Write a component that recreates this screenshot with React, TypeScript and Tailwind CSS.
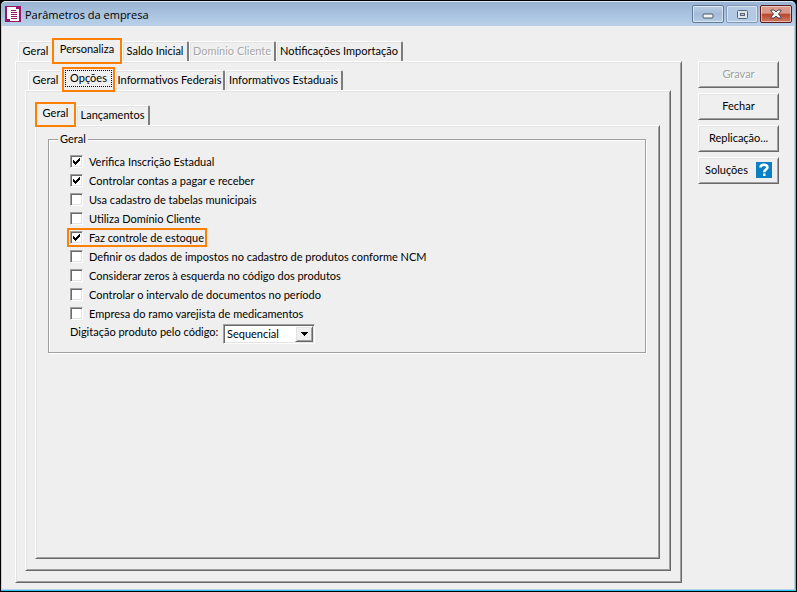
import { useState, type ReactNode } from "react";

const raised =
  "border border-t-white border-l-white border-r-[#696969] border-b-[#696969] shadow-[inset_1px_1px_0_#e3e3e3,inset_-1px_-1px_0_#a0a0a0]";

function TabRow({ label, children }: { label: string; children: ReactNode }) {
  return (
    <div role="tablist" aria-label={label} className="flex h-5 items-end pl-[3px] whitespace-nowrap">
      {children}
    </div>
  );
}

function Tab({
  width,
  children,
  edge = true,
  disabled = false,
}: {
  width: string;
  children: ReactNode;
  edge?: boolean;
  disabled?: boolean;
}) {
  return (
    <button
      type="button"
      role="tab"
      aria-selected={false}
      disabled={disabled}
      className={`h-5 shrink-0 rounded-t-[2px] border-t border-l border-white pb-0.5 shadow-[inset_1px_1px_0_#e3e3e3] ${
        edge ? "border-r-2 border-r-[#7c7c7c]" : ""
      } ${disabled ? "text-[#a8a8a8] [text-shadow:1px_1px_0_#fff]" : ""} ${width}`}
    >
      {children}
    </button>
  );
}

function SelectedTab({
  size,
  focus = false,
  children,
}: {
  size: string;
  focus?: boolean;
  children: ReactNode;
}) {
  return (
    <button
      type="button"
      role="tab"
      aria-selected
      className={`relative z-10 shrink-0 border-2 border-[#ff8000] bg-[#efefef] p-px pb-[3px] ${size}`}
    >
      <span
        className={`flex h-full items-center justify-center border pb-0.5 ${
          focus ? "border-dotted border-black" : "border-transparent"
        }`}
      >
        {children}
      </span>
    </button>
  );
}

function Option({
  id,
  label,
  initial = false,
  highlight = false,
}: {
  id: string;
  label: string;
  initial?: boolean;
  highlight?: boolean;
}) {
  const [checked, setChecked] = useState(initial);
  return (
    <div
      className={`flex h-[19px] items-center self-start border-2 px-px ${
        highlight ? "border-[#ff8000]" : "border-transparent"
      }`}
    >
      <span className="grid size-[13px] place-items-center">
        <input
          id={id}
          type="checkbox"
          checked={checked}
          onChange={(e) => setChecked(e.target.checked)}
          className="col-start-1 row-start-1 size-[13px] appearance-none border border-t-[#a0a0a0] border-l-[#a0a0a0] border-r-white border-b-white bg-white shadow-[inset_1px_1px_0_#696969,inset_-1px_-1px_0_#e3e3e3]"
        />
        {checked && (
          <svg
            viewBox="0 0 7 7"
            className="pointer-events-none col-start-1 row-start-1 size-[7px]"
            shapeRendering="crispEdges"
            aria-hidden="true"
          >
            <path d="M0 2h1v1h1v1h1V3h1V2h1V1h1V0h1v3H6v1H5v1H4v1H3v1H2V6H1V5H0z" />
          </svg>
        )}
      </span>
      <label htmlFor={id} className="pl-1.5 whitespace-nowrap">
        {label}
      </label>
    </div>
  );
}

function ActionButton({ children, disabled = false }: { children: ReactNode; disabled?: boolean }) {
  return (
    <button
      type="button"
      disabled={disabled}
      className={`flex h-[27px] w-full items-center justify-center gap-2 bg-[#efefef] pb-0.5 ${raised} ${
        disabled ? "text-[#a0a0a0] [text-shadow:1px_1px_0_#fff]" : ""
      }`}
    >
      {children}
    </button>
  );
}

const frameButton =
  "flex h-[18px] w-8 items-center justify-center rounded-[2px] border shadow-[inset_0_0_0_1px_rgba(255,255,255,0.5)]";

export default function App() {
  return (
    <div className="flex min-h-screen flex-col bg-black p-px font-['Lato','Liberation_Sans',sans-serif] text-[11px] leading-[14px] text-black">
      <div className="flex flex-1 flex-col rounded-t-[5px] border-r border-b border-[#26c9ea] bg-[#b9d1ea]">
        <header className="flex h-[25px] items-center rounded-t-[5px] border-t border-[#dfe9f5] bg-linear-to-b from-[#98b3d3] to-[#b9d1ea] pr-[3px] pl-1">
          <svg viewBox="0 0 16 16" className="size-4" shapeRendering="crispEdges" aria-hidden="true">
            <path fill="#97146a" d="M0 0h16v16H0z" />
            <path fill="#fff" d="M2 1h9v2h3v12H5v-2H2z" />
            <path fill="#97146a" d="M6 4h5v1H6zM6 6h6v1H6zM6 8h6v1H6zM6 10h6v1H6zM6 12h6v1H6z" />
          </svg>
          <h1 className="flex-1 pt-0.5 pl-1 font-['Open_Sans','Noto_Sans',sans-serif]">Parâmetros da empresa</h1>
          <div className="flex gap-0.5">
            <button
              type="button"
              aria-label="Minimizar"
              className={`${frameButton} border-[#5f7894] bg-linear-to-b from-[#bccfe5] via-[#a3bcd9] to-[#b5cce6]`}
            >
              <svg viewBox="0 0 12 6" className="mt-1 h-1.5 w-3" aria-hidden="true">
                <rect x="1" y="1" width="10" height="4" rx="1" fill="#f4f4f4" stroke="#4d5666" />
              </svg>
            </button>
            <button
              type="button"
              aria-label="Maximizar"
              disabled
              className={`${frameButton} border-[#8199b7] bg-linear-to-b from-[#b4c9e2] to-[#b2cae5]`}
            >
              <svg viewBox="0 0 11 9" className="h-[9px] w-[11px]" aria-hidden="true">
                <rect x=".5" y=".5" width="10" height="8" rx="1" fill="#dde4ec" stroke="#5a6476" />
                <rect x="3.5" y="3.5" width="4" height="2" fill="#b2cae5" stroke="#5a6476" />
              </svg>
            </button>
            <button
              type="button"
              aria-label="Fechar janela"
              className={`${frameButton} border-[#5a1a1a] bg-linear-to-b from-[#d99a8c] from-45% via-[#b8432c] via-50% to-[#cf7a62]`}
            >
              <svg viewBox="0 0 12 10" className="h-2.5 w-3" aria-hidden="true">
                <path
                  d="M1 1h3l2 2 2-2h3v1L8.500 5 11 8v1H8L6 7 4 9H1V8l2.500-3L1 2z"
                  fill="#f6f6f6"
                  stroke="#4a4652"
                  strokeLinejoin="round"
                />
              </svg>
            </button>
          </div>
        </header>

        <div className="mx-px mb-px flex flex-1 items-stretch gap-4 bg-[#efefef] pt-[15px] pr-[15px] pb-1.5 pl-[13px]">
          <main className="flex min-w-0 flex-1 flex-col">
            <TabRow label="Parâmetros">
              <Tab width="w-[34px]" edge={false}>Geral</Tab>
              <SelectedTab size="-mb-[3px] h-[26px] w-[70px]">Personaliza</SelectedTab>
              <Tab width="w-[67px]">Saldo Inicial</Tab>
              <Tab width="w-[87px]" disabled>Domínio Cliente</Tab>
              <Tab width="w-[127px]">Notificações Importação</Tab>
            </TabRow>

            <section className={`flex flex-1 flex-col pt-2 pr-2.5 pb-[11px] pl-[9px] ${raised}`}>
              <TabRow label="Personaliza">
                <Tab width="w-[34px]" edge={false}>Geral</Tab>
                <SelectedTab size="-mb-[2px] h-[25px] w-[53px]" focus>Opções</SelectedTab>
                <Tab width="w-[110px]">Informativos Federais</Tab>
                <Tab width="w-[118px]">Informativos Estaduais</Tab>
              </TabRow>

              <section className={`flex flex-1 flex-col pt-3.5 pr-2.5 pb-[11px] pl-[9px] ${raised}`}>
                <TabRow label="Opções">
                  <SelectedTab size="-mb-[2px] -ml-[3px] h-[25px] w-[41px]">Geral</SelectedTab>
                  <Tab width="w-[74px]">Lançamentos</Tab>
                </TabRow>

                <section className={`flex-1 pt-1.5 pr-[13px] pl-3 ${raised}`}>
                  <fieldset className="flex flex-col border border-[#a0a0a0] pr-2 pb-2 pl-[18px] shadow-[1px_1px_0_#fff,inset_1px_1px_0_#fff]">
                    <legend className="-ml-[9px] bg-[#efefef] px-[2px]">Geral</legend>
                    <div className="flex flex-col pt-1.5">
                      <Option id="inscricao" label="Verifica Inscrição Estadual" initial />
                      <Option id="contas" label="Controlar contas a pagar e receber" initial />
                      <Option id="tabelas" label="Usa cadastro de tabelas municipais" />
                      <Option id="cliente" label="Utiliza Domínio Cliente" />
                      <Option id="estoque" label="Faz controle de estoque" initial highlight />
                      <Option id="ncm" label="Definir os dados de impostos no cadastro de produtos conforme NCM" />
                      <Option id="zeros" label="Considerar zeros à esquerda no código dos produtos" />
                      <Option id="intervalo" label="Controlar o intervalo de documentos no período" />
                      <Option id="medicamentos" label="Empresa do ramo varejista de medicamentos" />
                    </div>
                    <div className="flex items-start pt-px pl-[3px]">
                      <label htmlFor="digitacao" className="w-[153px] pt-px">
                        Digitação produto pelo código:
                      </label>
                      <div className="grid h-5 w-[92px] grid-cols-[1fr_18px] border border-t-[#a0a0a0] border-l-[#a0a0a0] border-r-white border-b-white bg-white p-px shadow-[inset_1px_1px_0_#696969,inset_-1px_-1px_0_#e3e3e3]">
                        <select
                          id="digitacao"
                          className="col-span-2 col-start-1 row-start-1 h-4 appearance-none bg-transparent pl-0.5"
                        >
                          <option>Sequencial</option>
                        </select>
                        <span
                          aria-hidden="true"
                          className={`pointer-events-none col-start-2 row-start-1 flex h-4 items-center justify-center bg-[#efefef] ${raised}`}
                        >
                          <svg viewBox="0 0 7 4" className="h-1 w-[7px]" shapeRendering="crispEdges">
                            <path d="M0 0h7v1H6v1H5v1H4v1H3V3H2V2H1V1H0z" />
                          </svg>
                        </span>
                      </div>
                    </div>
                  </fieldset>
                </section>
              </section>
            </section>
          </main>

          <aside className="flex w-[81px] shrink-0 flex-col gap-[5px] pt-5">
            <ActionButton disabled>Gravar</ActionButton>
            <ActionButton>Fechar</ActionButton>
            <ActionButton>Replicação...</ActionButton>
            <ActionButton>
              Soluções
              <svg viewBox="0 0 16 16" className="size-4" aria-hidden="true">
                <path fill="#0a80c4" d="M0 0h16v16H0z" />
                <path fill="none" stroke="#fff" strokeWidth="2.500" d="M4.500 5.500C4.500 2 11.500 2 11.500 5.200c0 2.200-3.300 2.300-3.300 5" />
                <path fill="#fff" d="M7 11.500h2.500V14H7z" />
              </svg>
            </ActionButton>
          </aside>
        </div>
      </div>
    </div>
  );
}
